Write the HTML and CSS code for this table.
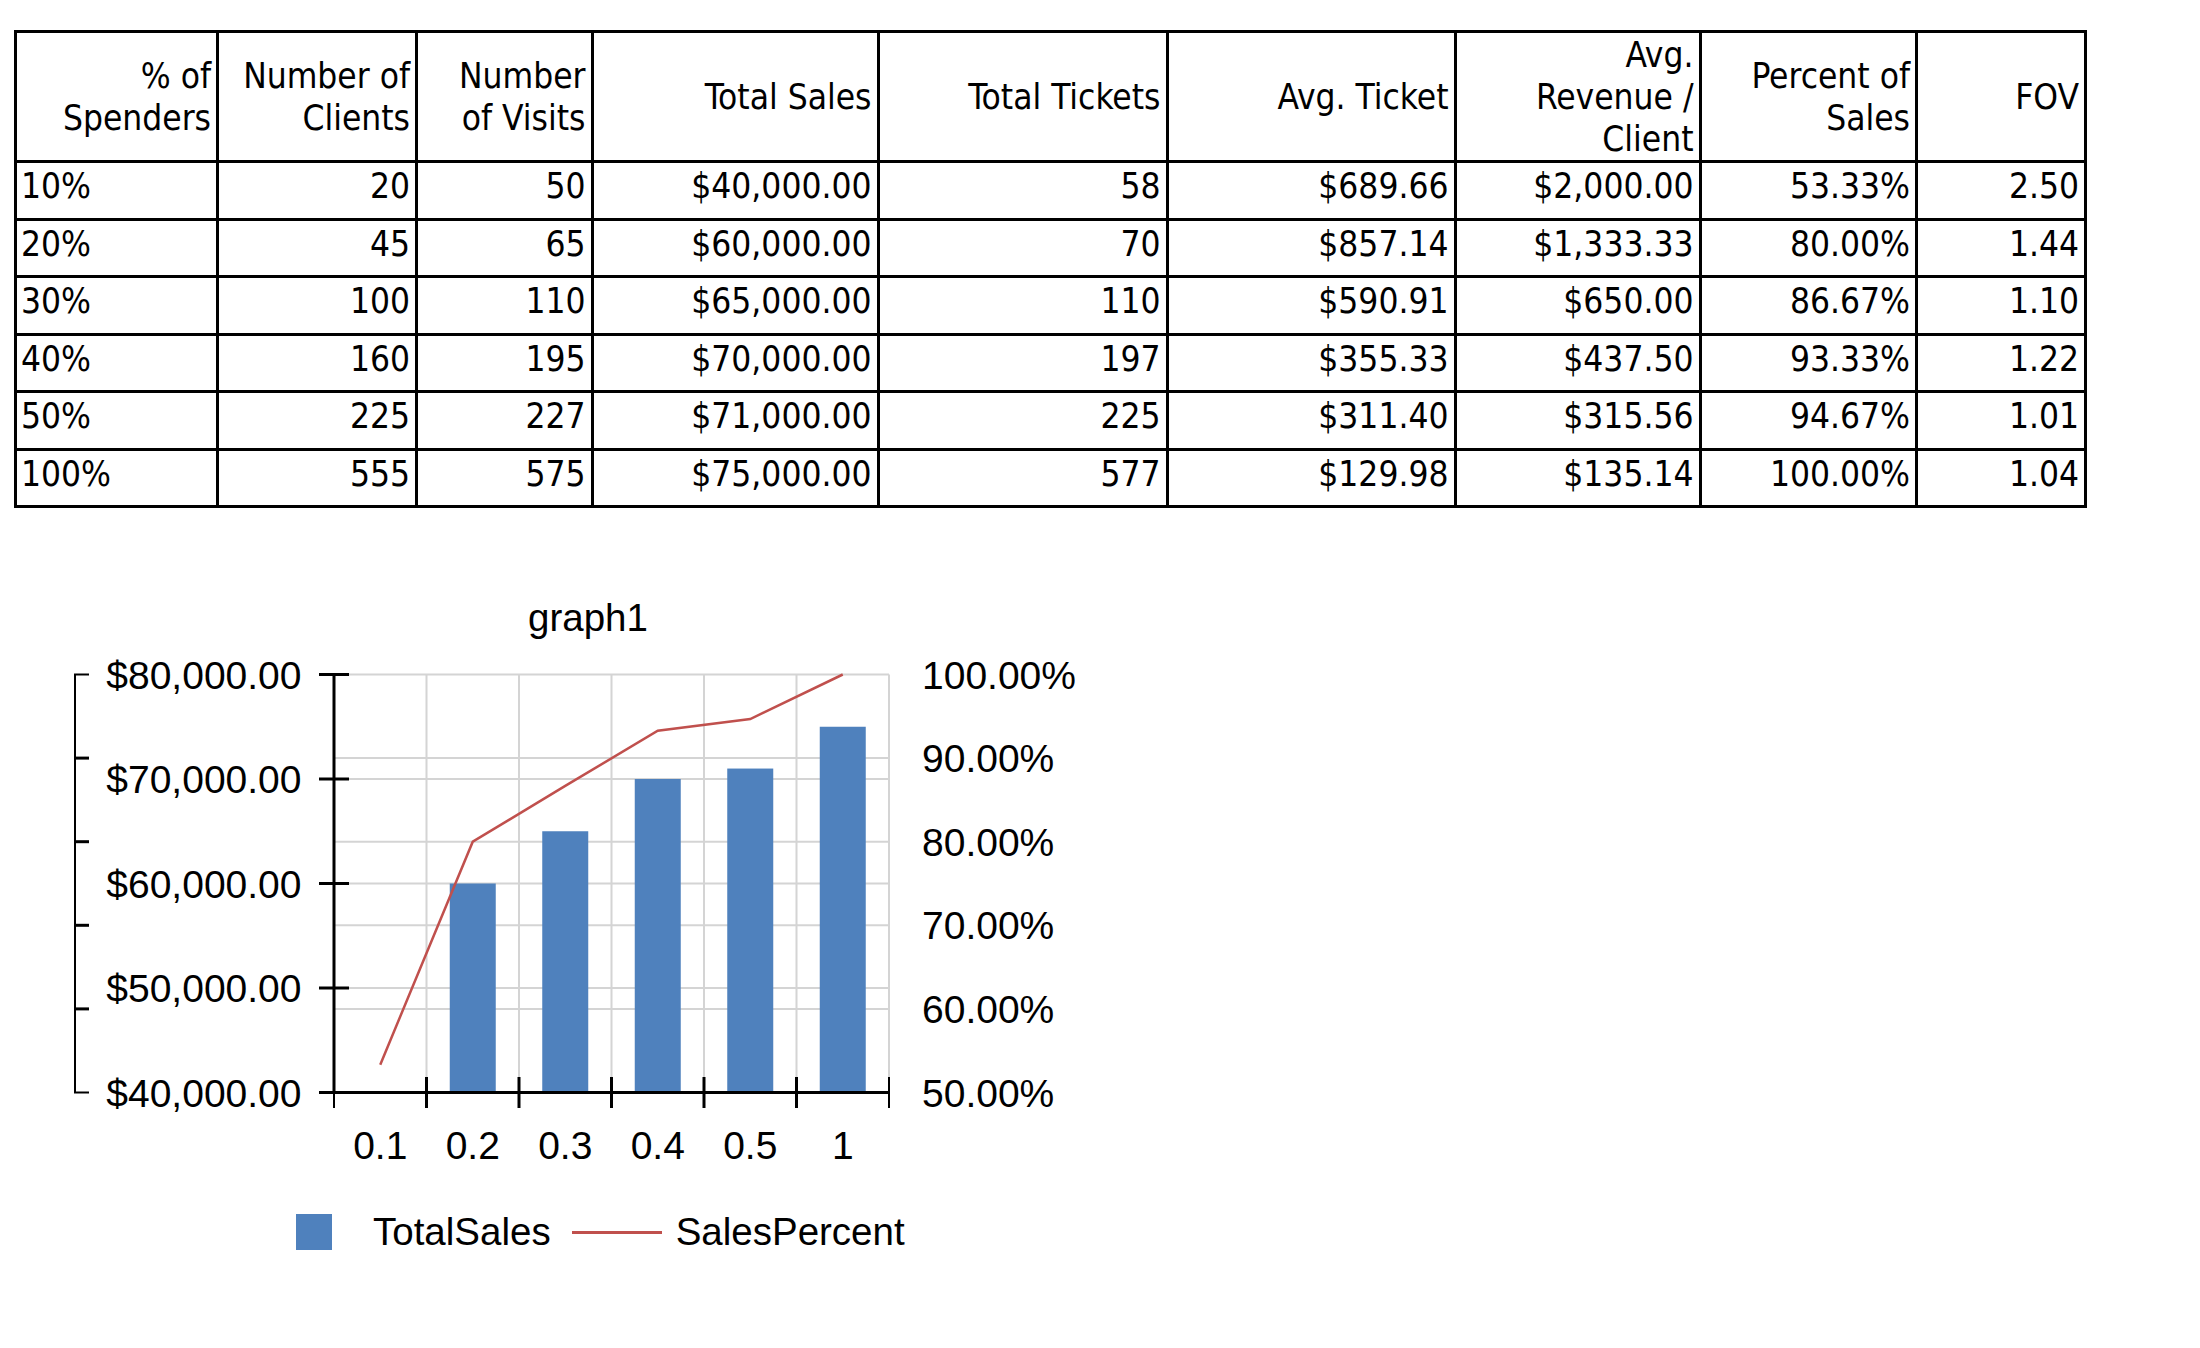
FILE: index.html
```html
<!DOCTYPE html>
<html lang="en">
<head>
<meta charset="utf-8">
<title>Spenders report</title>
<link rel="stylesheet" href="styles.css">
</head>
<body>
<table class="data">
  <thead>
    <tr>
      <th class="c1">% of<br>Spenders</th>
      <th class="c2">Number of<br>Clients</th>
      <th class="c3">Number<br>of Visits</th>
      <th class="c4">Total Sales</th>
      <th class="c5">Total Tickets</th>
      <th class="c6">Avg. Ticket</th>
      <th class="c7">Avg.<br>Revenue /<br>Client</th>
      <th class="c8">Percent of<br>Sales</th>
      <th class="c9">FOV</th>
    </tr>
  </thead>
  <tbody>
    <tr><td class="first">10%</td><td>20</td><td>50</td><td>$40,000.00</td><td>58</td><td>$689.66</td><td>$2,000.00</td><td>53.33%</td><td>2.50</td></tr>
    <tr><td class="first">20%</td><td>45</td><td>65</td><td>$60,000.00</td><td>70</td><td>$857.14</td><td>$1,333.33</td><td>80.00%</td><td>1.44</td></tr>
    <tr><td class="first">30%</td><td>100</td><td>110</td><td>$65,000.00</td><td>110</td><td>$590.91</td><td>$650.00</td><td>86.67%</td><td>1.10</td></tr>
    <tr><td class="first">40%</td><td>160</td><td>195</td><td>$70,000.00</td><td>197</td><td>$355.33</td><td>$437.50</td><td>93.33%</td><td>1.22</td></tr>
    <tr><td class="first">50%</td><td>225</td><td>227</td><td>$71,000.00</td><td>225</td><td>$311.40</td><td>$315.56</td><td>94.67%</td><td>1.01</td></tr>
    <tr><td class="first">100%</td><td>555</td><td>575</td><td>$75,000.00</td><td>577</td><td>$129.98</td><td>$135.14</td><td>100.00%</td><td>1.04</td></tr>
  </tbody>
</table>

<section class="chart">
  <div class="chart-title">graph1</div>
  <svg class="plot" width="1150" height="571" viewBox="0 637 1150 571" xmlns="http://www.w3.org/2000/svg">
    <g class="grid">
      <line x1="334" y1="673.5" x2="889" y2="673.5"/>
      <line x1="334" y1="757.1" x2="889" y2="757.1"/>
      <line x1="334" y1="778" x2="889" y2="778"/>
      <line x1="334" y1="840.7" x2="889" y2="840.7"/>
      <line x1="334" y1="882.5" x2="889" y2="882.5"/>
      <line x1="334" y1="924.3" x2="889" y2="924.3"/>
      <line x1="334" y1="987" x2="889" y2="987"/>
      <line x1="334" y1="1007.9" x2="889" y2="1007.9"/>
      <line x1="426.5" y1="673.5" x2="426.5" y2="1091.5"/>
      <line x1="519" y1="673.5" x2="519" y2="1091.5"/>
      <line x1="611.5" y1="673.5" x2="611.5" y2="1091.5"/>
      <line x1="704" y1="673.5" x2="704" y2="1091.5"/>
      <line x1="796.5" y1="673.5" x2="796.5" y2="1091.5"/>
      <line x1="889" y1="673.5" x2="889" y2="1091.5"/>
    </g>
    <g class="bars">
      <rect x="449.75" y="882.5" width="46" height="209"/>
      <rect x="542.25" y="830.25" width="46" height="261.25"/>
      <rect x="634.75" y="778" width="46" height="313.5"/>
      <rect x="727.25" y="767.55" width="46" height="323.95"/>
      <rect x="819.75" y="725.75" width="46" height="365.75"/>
    </g>
    <polyline class="series" points="380.25,1063.66 472.75,840.7 565.25,784.94 657.75,729.7 750.25,718.1 842.75,673.5"/>
    <g class="bracket">
      <line x1="75" y1="673.5" x2="75" y2="1091.5"/>
      <line x1="74" y1="673.5" x2="89" y2="673.5"/>
      <line x1="74" y1="1091.5" x2="89" y2="1091.5"/>
    </g>
    <g class="bracket-major">
      <line x1="74" y1="757.1" x2="89" y2="757.1"/>
      <line x1="74" y1="840.7" x2="89" y2="840.7"/>
      <line x1="74" y1="924.3" x2="89" y2="924.3"/>
      <line x1="74" y1="1007.9" x2="89" y2="1007.9"/>
    </g>
    <g class="axis">
      <line x1="334" y1="672" x2="334" y2="1093"/>
      <line x1="333" y1="1091.5" x2="889" y2="1091.5"/>
      <line x1="319" y1="673.5" x2="349" y2="673.5"/>
      <line x1="319" y1="778" x2="349" y2="778"/>
      <line x1="319" y1="882.5" x2="349" y2="882.5"/>
      <line x1="319" y1="987" x2="349" y2="987"/>
      <line x1="319" y1="1091.5" x2="349" y2="1091.5"/>
      <line x1="426.5" y1="1076" x2="426.5" y2="1107"/>
      <line x1="519" y1="1076" x2="519" y2="1107"/>
      <line x1="611.5" y1="1076" x2="611.5" y2="1107"/>
      <line x1="704" y1="1076" x2="704" y2="1107"/>
      <line x1="796.5" y1="1076" x2="796.5" y2="1107"/>
    </g>
    <g class="axis-thin">
      <line x1="334" y1="1091" x2="334" y2="1107"/>
      <line x1="889" y1="1076" x2="889" y2="1107"/>
    </g>
    <g class="lbl lbl-left">
      <text x="301.5" y="687.5">$80,000.00</text>
      <text x="301.5" y="792">$70,000.00</text>
      <text x="301.5" y="896.5">$60,000.00</text>
      <text x="301.5" y="1001">$50,000.00</text>
      <text x="301.5" y="1105.5">$40,000.00</text>
    </g>
    <g class="lbl lbl-right">
      <text x="922" y="687.5">100.00%</text>
      <text x="922" y="771.1">90.00%</text>
      <text x="922" y="854.7">80.00%</text>
      <text x="922" y="938.3">70.00%</text>
      <text x="922" y="1021.9">60.00%</text>
      <text x="922" y="1105.5">50.00%</text>
    </g>
    <g class="lbl lbl-x">
      <text x="380.25" y="1157.8">0.1</text>
      <text x="472.75" y="1157.8">0.2</text>
      <text x="565.25" y="1157.8">0.3</text>
      <text x="657.75" y="1157.8">0.4</text>
      <text x="750.25" y="1157.8">0.5</text>
      <text x="842.75" y="1157.8">1</text>
    </g>
  </svg>
  <div class="legend">
    <span class="swatch"></span>
    <span class="legend-label">TotalSales</span>
    <span class="legend-line"></span>
    <span class="legend-label">SalesPercent</span>
  </div>
</section>
</body>
</html>
```
FILE: styles.css
```css
html, body {
  margin: 0;
  padding: 0;
  background: #ffffff;
  color: #000000;
}

.data {
  box-sizing: border-box;
  width: 2073px;
  margin: 30px 0 0 14px;
  border-collapse: separate;
  border-spacing: 0;
  table-layout: fixed;
  border-left: 3px solid #000;
  border-top: 3px solid #000;
  font-family: "DejaVu Sans Condensed", "DejaVu Sans", sans-serif;
  font-stretch: condensed;
  font-size: 35px;
}

.data th,
.data td {
  box-sizing: border-box;
  border-right: 3px solid #000;
  border-bottom: 3px solid #000;
  padding: 0 5px;
  text-align: right;
  vertical-align: middle;
  font-weight: normal;
  line-height: 42px;
  white-space: nowrap;
}

.data th {
  height: 130px;
}

.data td {
  height: 57.5px;
  padding-bottom: 8px;
}

.data td.first {
  text-align: left;
  padding-left: 4px;
}

.c1 { width: 202px; }
.c2 { width: 199px; }
.c3 { width: 175.5px; }
.c4 { width: 286px; }
.c5 { width: 289px; }
.c6 { width: 288px; }
.c7 { width: 245px; }
.c8 { width: 216.5px; }
.c9 { width: 169px; }

.chart {
  margin-top: 84px;
  width: 1176px;
  font-family: "Liberation Sans", Arial, sans-serif;
  font-size: 38.5px;
}

.chart-title {
  text-align: center;
  line-height: 46px;
  height: 43px;
  padding-top: 3px;
  overflow: visible;
}

.plot {
  display: block;
}

.grid line {
  stroke: #d4d4d4;
  stroke-width: 2;
}

.bars rect {
  fill: #4f81bd;
}

.series {
  fill: none;
  stroke: #c0504d;
  stroke-width: 2.5;
  stroke-linejoin: miter;
}

.bracket line {
  stroke: #000;
  stroke-width: 2;
}

.bracket-major line {
  stroke: #000;
  stroke-width: 3;
}

.axis line {
  stroke: #000;
  stroke-width: 3;
}

.axis-thin line {
  stroke: #000;
  stroke-width: 2;
}

.lbl text {
  font-family: "Liberation Sans", Arial, sans-serif;
  font-size: 39px;
  fill: #000;
}

.lbl-left text { text-anchor: end; }
.lbl-right text { text-anchor: start; }
.lbl-x text { text-anchor: middle; }

.legend {
  display: flex;
  align-items: center;
  height: 40px;
  margin-top: 3px;
  margin-left: 296px;
}

.swatch {
  width: 36px;
  height: 36px;
  background: #4f81bd;
  margin-right: 41px;
}

.legend-label {
  line-height: 40px;
}

.legend-line {
  width: 90px;
  height: 3px;
  background: #c0504d;
  margin: 0 14px 0 21px;
}
```
